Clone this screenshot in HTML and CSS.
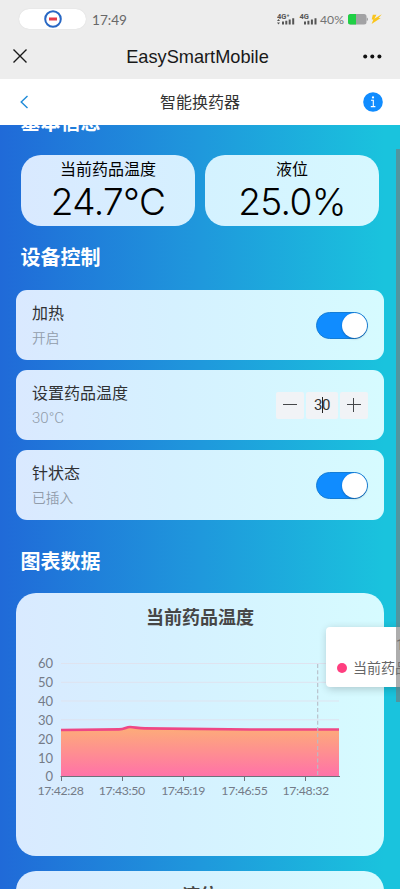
FILE: index.html
```html
<!DOCTYPE html>
<html lang="zh-CN">
<head>
<meta charset="utf-8">
<meta name="viewport" content="width=device-width, initial-scale=1">
<title>智能换药器</title>
<link rel="stylesheet" href="styles.css">
</head>
<body>
<div class="phone">
  <header class="system">
    <div class="status">
      <div class="capsule">
        <svg width="18" height="18" viewBox="0 0 18 18"><circle cx="9" cy="9" r="7.8" fill="#fff" stroke="#2867c4" stroke-width="2"/><rect x="5" y="7.5" width="8" height="3" fill="#e43b48"/></svg>
      </div>
      <span class="clock">17:49</span>
      <svg class="signals" width="42" height="14" viewBox="0 0 42 14" fill="#555">
        <text class="net" x="0" y="6.5">4G⁺</text><text class="net" x="22.5" y="6.5">4G</text>
        <path d="M0 9l1.5-2L3 9zM0 10.5h3l-1.5 2zM5 9.5h2v3H5zM8.3 8.8h2v3.7h-2zM11.7 7.5h2v5h-2zM15.2 6.2h2v6.3h-2zM27 9.5h2v3h-2zM30.4 8.8h2v3.7h-2zM33.9 7.5h2v5h-2zM37.5 6.2h2v6.3h-2z"/>
      </svg>
      <span class="percent">40%</span>
      <svg class="battery" width="20" height="11" viewBox="0 0 20 11"><rect x="0" y="0" width="18.5" height="10.5" rx="2.5" fill="#a2a2a4"/><path d="M2.5 0H8v10.5H2.5A2.5 2.5 0 0 1 0 8V2.5A2.5 2.5 0 0 1 2.5 0z" fill="#20d045"/><path d="M18.7 3.5q1.3 0 1.3 1.8t-1.3 1.8z" fill="#a2a2a4"/></svg>
      <svg class="bolt" width="12" height="11" viewBox="0 0 12 11"><path d="M1.8.8h3.7L3.3 4.8 10.8.3 7.6 4h2.1L.6 10 2.4 5.6H.7z" fill="#fac51c"/></svg>
    </div>
    <div class="titlebar">
      <svg width="14" height="14" viewBox="0 0 14 14" fill="none" stroke="#191919" stroke-width="1.4"><path d="M.5.5l13 13M13.5.5l-13 13"/></svg>
      <span class="app-name">EasySmartMobile</span>
      <svg width="19" height="5" viewBox="0 0 19 5" fill="#111"><circle cx="2.2" cy="2.5" r="2"/><circle cx="9.3" cy="2.5" r="2"/><circle cx="16.4" cy="2.5" r="2"/></svg>
    </div>
  </header>
  <nav class="navbar">
    <svg width="9" height="14" viewBox="0 0 9 14" fill="none" stroke="#208bd8" stroke-width="1.4"><path d="M7.5 1L1.2 7l6.3 6"/></svg>
    <span>智能换药器</span>
    <svg width="20" height="20" viewBox="0 0 20 20"><circle cx="10" cy="10" r="9.8" fill="#108cff"/><path d="M8 8.2h2.3v6.3M7.8 14.6h4.6" fill="none" stroke="#fff" stroke-width="1.1"/><circle cx="10" cy="5.4" r="1.1" fill="#fff"/></svg>
  </nav>
  <main class="content">
    <h2 class="heading heading-clipped">基本信息</h2>
    <section class="stats">
      <div class="stat"><span class="stat-label">当前药品温度</span><span class="stat-value">24.7°C</span></div>
      <div class="stat"><span class="stat-label">液位</span><span class="stat-value">25.0%</span></div>
    </section>
    <h2 class="heading heading-control">设备控制</h2>
    <section class="controls">
      <div class="control">
        <div class="label"><span class="name">加热</span><span class="state">开启</span></div>
        <span class="switch"><i></i></span>
      </div>
      <div class="control">
        <div class="label"><span class="name">设置药品温度</span><span class="state latin">30°C</span></div>
        <div class="stepper">
          <span class="step"><svg width="14" height="14" viewBox="0 0 14 14" stroke="#45474a"><path d="M0 6.5h14"/></svg></span>
          <span class="field"><span>3</span><i class="caret"></i><span>0</span></span>
          <span class="step"><svg width="14" height="14" viewBox="0 0 14 14" stroke="#45474a"><path d="M0 6.5h14M6.5 0v14"/></svg></span>
        </div>
      </div>
      <div class="control">
        <div class="label"><span class="name">针状态</span><span class="state">已插入</span></div>
        <span class="switch"><i></i></span>
      </div>
    </section>
    <h2 class="heading heading-chart">图表数据</h2>
    <section class="chart-card">
      <h3>当前药品温度</h3>
      <svg class="chart" width="368" height="190" viewBox="16 630 368 190">
        <defs><linearGradient id="area" x1="0" y1="0" x2="0" y2="1"><stop offset="0" stop-color="#fdad78"/><stop offset="1" stop-color="#ff72a8"/></linearGradient></defs>
        <path d="M61 663.5h278M61 682.3h278M61 701h278M61 719.8h278" stroke="#dfe3ef" stroke-width="1"/>
        <path d="M61 730L120 729.4C125 729 126 727 130 727C135 727 137 728.3 145 728.4L250 729.5L339 729.5V776H61z" fill="url(#area)"/>
        <path d="M61 730L119 729.4C125 729.3 126 727 130 727C135 727 137 728.3 145 728.4L250 729.5L339 729.5" fill="none" stroke="#ee4785" stroke-width="2.7"/>
        <path d="M60.5 776.5H340M61.5 776v5M122.5 776v5M183.5 776v5M244.5 776v5M305.5 776v5" fill="none" stroke="#6e7079" stroke-width="1"/>
        <path d="M317.7 664V776" stroke="#b7bdc7" stroke-width="1.1" stroke-dasharray="4 2.3"/>
        <g class="axis y-axis"><text x="53" y="668">60</text><text x="53" y="687">50</text><text x="53" y="706">40</text><text x="53" y="725">30</text><text x="53" y="743.5">20</text><text x="53" y="762.5">10</text><text x="53" y="781">0</text></g>
        <g class="axis x-axis"><text x="60.7" y="795" textLength="46.5">17:42:28</text><text x="122" y="795" textLength="46.5">17:43:50</text><text x="183.3" y="795" textLength="44">17:45:19</text><text x="244.6" y="795" textLength="46.5">17:46:55</text><text x="305.8" y="795" textLength="46.5">17:48:32</text></g>
      </svg>
      <div class="tooltip"><span class="tip-time">17:48:51</span><span class="tip-row"><i></i>当前药品温度</span></div>
    </section>
    <section class="chart-card next-card"><h3>液位</h3></section>
    <div class="scrollbar"></div>
  </main>
</div>
</body>
</html>
```

FILE: styles.css
```css
* { box-sizing: border-box; }
body { margin: 0; font-family: Roboto, "Noto Sans CJK SC", sans-serif; }
h2, h3 { margin: 0; }
svg { display: block; flex: none; }
.phone { width: 400px; height: 889px; overflow: hidden; display: flex; flex-direction: column; }
.system { height: 79px; background: #ededed; flex: none; }
.status { height: 38px; padding-left: 19px; display: flex; align-items: center; }
.capsule { width: 67px; height: 20px; border-radius: 10px; background: #fff; display: flex; align-items: center; justify-content: center; box-shadow: 0 0 1px #ccc; }
.clock { width: 184px; margin-left: 6px; padding-top: 1px; font: 13.6px/20px Lato, sans-serif; color: #686868; }
.signals { margin-left: 1px; }
.net { font: 700 7.5px Roboto, sans-serif; }
.percent { width: 27px; margin-left: 1px; padding-top: 2px; font: 12.2px/20px Lato, sans-serif; color: #737373; }
.battery { margin-left: 1px; }
.bolt { margin-left: 3px; }
.titlebar { height: 36px; padding: 0 18px 0 13px; display: grid; grid-template-columns: 14px 1fr 19px; align-items: center; }
.app-name { font: 18.2px/24px "Liberation Sans", sans-serif; color: #191919; text-align: center; padding-left: 5px; margin-top: 2px; white-space: nowrap; }
.navbar { height: 46px; flex: none; background: #fff; padding: 0 17px 0 20px; display: grid; grid-template-columns: 20px 1fr 20px; align-items: center; font-size: 16px; color: #333; }
.navbar span { text-align: center; padding-right: 3px; margin-top: -2px; }
.content { position: relative; flex: 1; min-height: 0; overflow: hidden; background: linear-gradient(90deg, #206ad8 0%, #1f98dc 50%, #1ac3dd 96%); }
.heading { padding-left: 20.5px; font: 700 20px/28px Roboto, "Noto Sans CJK SC", sans-serif; color: #fff; }
.heading-clipped { height: 28px; margin-top: -16px; }
.stats { display: flex; gap: 10px; margin-top: 18px; padding: 0 21px; }
.stat { flex: 1; height: 71px; border-radius: 20px; background: #d8ebff; display: flex; flex-direction: column; align-items: center; color: #000; }
.stat:first-child { background: linear-gradient(90deg, #d9e9ff, #d5f0ff); }
.stat:last-child { background: linear-gradient(90deg, #d4f2ff, #d6f8ff); }
.stat-label { font-size: 16px; line-height: 20px; margin-top: 5px; }
.stat-value { font: 300 37px/40px Inter, sans-serif; margin-top: 2px; letter-spacing: -.6px; }
.heading-control { margin-top: 18px; height: 28px; }
.controls { display: flex; flex-direction: column; gap: 10px; margin-top: 18px; padding: 0 16px; }
.control { height: 70px; padding: 0 16px; border-radius: 11px; background: linear-gradient(90deg, #dae9ff, #d5f1ff 43%, #d6fbff); display: flex; align-items: center; justify-content: space-between; }
.label { display: flex; flex-direction: column; }
.name { font-size: 16px; line-height: 24px; color: #303133; }
.state { font-size: 13.7px; line-height: 20px; margin-top: 2px; color: #919caa; font-weight: 350; }
.latin { font-family: Roboto, sans-serif; font-weight: 300; font-size: 15px; }
.switch { width: 52px; height: 27px; border-radius: 14px; background: #108cff; border: 1px solid #147dd6; display: flex; justify-content: flex-end; align-items: center; }
.switch i { width: 25px; height: 25px; border-radius: 50%; background: #fff; box-shadow: 0 1px 2px #0004; }
.stepper { display: flex; gap: 2px; }
.step, .field { height: 27px; width: 28px; border-radius: 2px; background: #f1f3f6; display: flex; align-items: center; justify-content: center; }
.field { width: 32px; font-size: 15px; color: #333; }
.field span { width: 8px; }
.caret { width: 1px; height: 16px; margin: 0 -1px 0 0; background: #222; }
.heading-chart { margin-top: 28px; height: 28px; }
.chart-card { position: relative; height: 263px; margin: 17px 16px 0; border-radius: 20px; background: linear-gradient(90deg, #d9eaff, #d5f1ff 43%, #d6fbff); }
.chart-card h3 { height: 37px; padding-top: 12px; text-align: center; font-size: 18px; line-height: 25px; color: #464646; }
.axis { font: 13px Lato, sans-serif; fill: #747b88; }
.y-axis { text-anchor: end; }
.x-axis { text-anchor: middle; font-size: 12.3px; }
.tooltip { position: absolute; left: 310px; top: 34px; width: 140px; height: 60px; padding: 6px 11px; border-radius: 4px; background: #fff; box-shadow: 1px 2px 9px #0003; color: #666; font-size: 14px; }
.tip-time { display: block; padding-left: 59px; line-height: 24px; }
.tip-row { display: flex; align-items: center; white-space: nowrap; line-height: 22px; }
.tip-row i { width: 10px; height: 10px; margin-right: 6px; border-radius: 50%; background: #ff3e7f; flex: none; }
.next-card { margin-top: 15px; }
.scrollbar { position: absolute; top: 24px; right: 0; width: 4px; height: 553px; background: #77777799; }
```
